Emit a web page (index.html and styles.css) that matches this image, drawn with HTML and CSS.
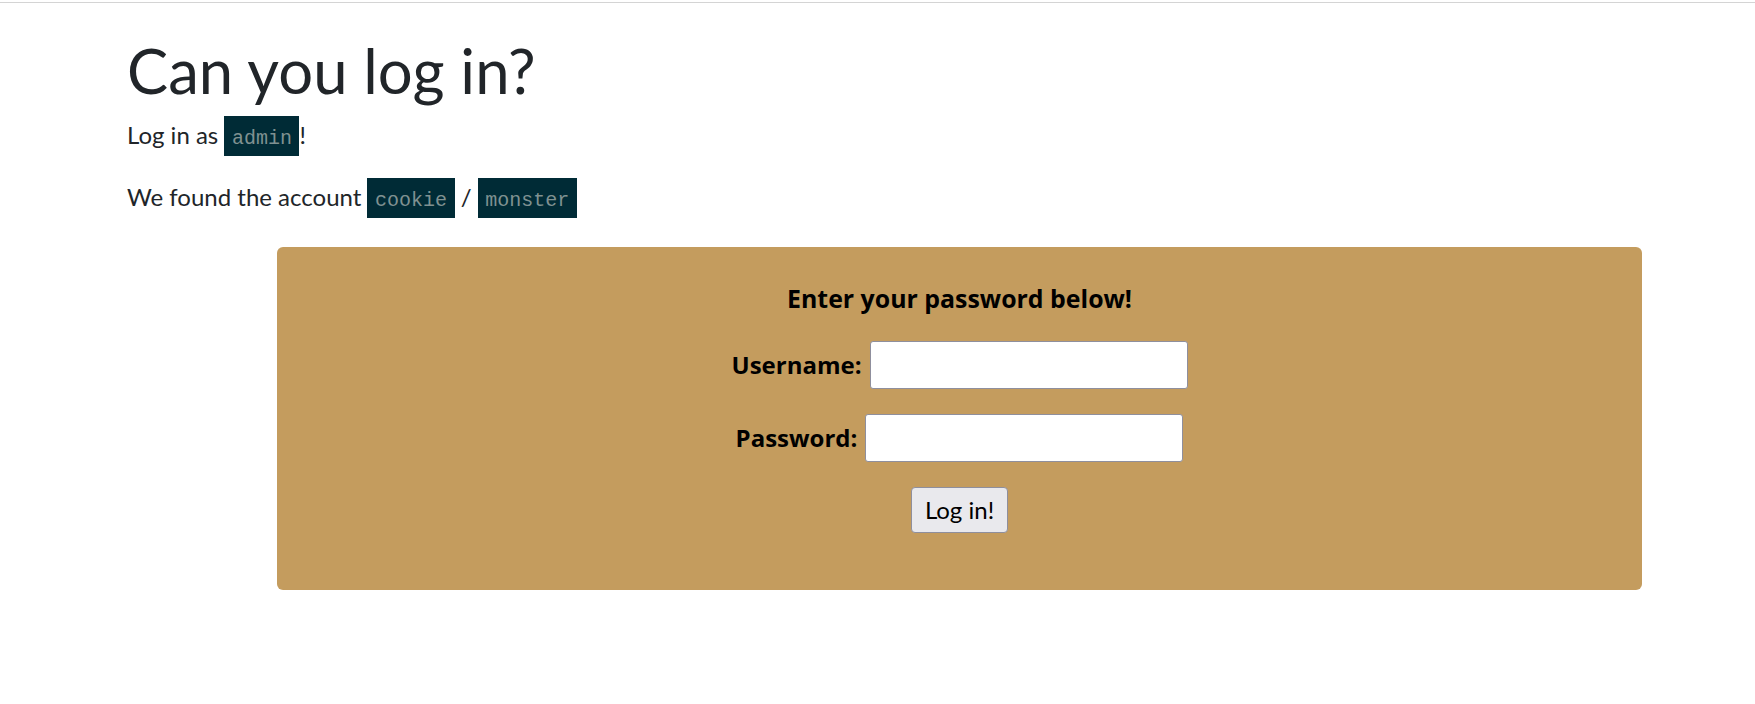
FILE: index.html
```html
<!DOCTYPE html>
<html lang="en">
<head>
<meta charset="utf-8">
<title>Can you log in?</title>
<link rel="stylesheet" href="styles.css">
</head>
<body>
<div class="topbar"></div>
<main class="page">
  <h1 class="title">Can you log in?</h1>
  <p class="lead">Log in as <code class="tok">admin</code>!</p>
  <p class="lead">We found the account <code class="tok">cookie</code> / <code class="tok">monster</code></p>
  <section class="panel">
    <form class="login" onsubmit="return false;">
      <h2 class="login-title">Enter your password below!</h2>
      <div class="row">
        <label class="lbl" for="username">Username:</label>
        <input class="field" id="username" type="text">
      </div>
      <div class="row">
        <label class="lbl" for="password">Password:</label>
        <input class="field" id="password" type="password">
      </div>
      <div class="row">
        <button class="btn" type="submit">Log in!</button>
      </div>
    </form>
  </section>
</main>
</body>
</html>
```
FILE: styles.css
```css
html, body {
  margin: 0;
  padding: 0;
  background: #ffffff;
}

body {
  font-family: "Lato", "Open Sans", "Liberation Sans", sans-serif;
  color: #212529;
  font-size: 24px;
  line-height: 1.5;
}

.topbar {
  margin-top: 2px;
  border-top: 1px solid #d4d4d4;
}

.page {
  padding: 0 0 0 127px;
}

.title {
  margin: 31px 0 9px;
  font-size: 61.6px;
  line-height: 1.2;
  font-weight: 400;
  color: #212529;
}

.lead {
  margin: 0 0 22px;
  font-size: 24px;
  line-height: 36px;
}

.tok {
  font-family: "Liberation Mono", "DejaVu Sans Mono", monospace;
  font-size: 20px;
  background: #002b36;
  color: #7f9191;
  padding: 11px 7.5px 6px;
}

.panel {
  margin: 28px 0 0 150px;
  width: 1365px;
  background: #c49c5e;
  border-radius: 6px;
  padding: 33px 0 57px;
  box-sizing: border-box;
}

.login {
  display: flex;
  flex-direction: column;
  align-items: center;
  gap: 25px;
  color: #000;
}

.login-title {
  margin: 0;
  font-family: "Open Sans", "Lato", sans-serif;
  font-size: 24.9px;
  line-height: 36px;
  font-weight: 700;
}

.row {
  display: flex;
  align-items: center;
  justify-content: center;
  gap: 8px;
}

.lbl {
  font-family: "Open Sans", "Lato", sans-serif;
  font-weight: 700;
  font-size: 24px;
}

.field {
  box-sizing: border-box;
  width: 318px;
  height: 48px;
  background: #fff;
  border: 1px solid #8f8f9d;
  border-radius: 3px;
  margin: 0;
  padding: 0 6px;
  font-size: 20px;
}

.btn {
  box-sizing: border-box;
  height: 46px;
  padding: 0 13px;
  background: #e9e9ed;
  border: 1px solid #8f8f9d;
  border-radius: 4px;
  font-family: inherit;
  font-size: 24px;
  color: #000;
}
```
